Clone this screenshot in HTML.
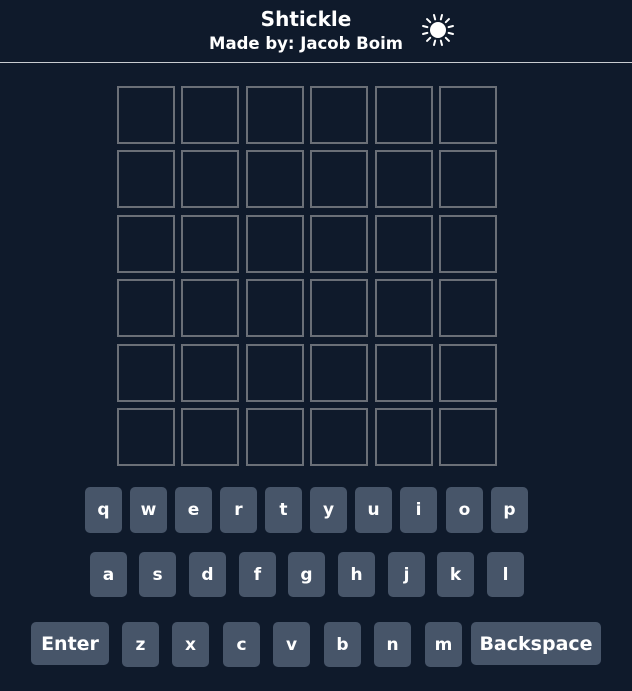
<!DOCTYPE html>
<html><head><meta charset="utf-8"><style>
html,body{margin:0;padding:0}
body{width:632px;height:691px;background:#0f1a2b;position:relative;overflow:hidden;font-family:"DejaVu Sans","Liberation Sans",sans-serif;font-weight:bold;color:#fff}
.t{position:absolute;left:0;width:612px;text-align:center}
.line{position:absolute;left:0;top:62px;width:632px;height:1px;background:#c9ccd1}
.tile{position:absolute;width:54px;height:54px;border:2px solid #6a6f77;box-sizing:content-box}
.k{position:absolute;background:#475569;border-radius:5px;display:flex;align-items:center;justify-content:center;font-size:17px;color:#fff}
</style></head><body>
<div class="t" style="top:7px;font-size:20px;">Shtickle</div>
<div class="t" style="top:34px;font-size:16.5px;">Made by: Jacob Boim</div>
<svg style="position:absolute;left:421px;top:13px" width="34" height="34" viewBox="-17 -17 34 34">
<circle r="8" fill="#fff"/>
<g stroke="#fff" stroke-width="2" stroke-linecap="round">
<line x1="0" y1="-11" x2="0" y2="-15.5" transform="rotate(15)"/>
<line x1="0" y1="-11" x2="0" y2="-15.5" transform="rotate(45)"/>
<line x1="0" y1="-11" x2="0" y2="-15.5" transform="rotate(75)"/>
<line x1="0" y1="-11" x2="0" y2="-15.5" transform="rotate(105)"/>
<line x1="0" y1="-11" x2="0" y2="-15.5" transform="rotate(135)"/>
<line x1="0" y1="-11" x2="0" y2="-15.5" transform="rotate(165)"/>
<line x1="0" y1="-11" x2="0" y2="-15.5" transform="rotate(195)"/>
<line x1="0" y1="-11" x2="0" y2="-15.5" transform="rotate(225)"/>
<line x1="0" y1="-11" x2="0" y2="-15.5" transform="rotate(255)"/>
<line x1="0" y1="-11" x2="0" y2="-15.5" transform="rotate(285)"/>
<line x1="0" y1="-11" x2="0" y2="-15.5" transform="rotate(315)"/>
<line x1="0" y1="-11" x2="0" y2="-15.5" transform="rotate(345)"/>
</g></svg>
<div class="line"></div>
<div class="k" style="left:85px;top:487px;width:37px;height:46px">q</div>
<div class="k" style="left:130px;top:487px;width:37px;height:46px">w</div>
<div class="k" style="left:175px;top:487px;width:37px;height:46px">e</div>
<div class="k" style="left:220px;top:487px;width:37px;height:46px">r</div>
<div class="k" style="left:265px;top:487px;width:37px;height:46px">t</div>
<div class="k" style="left:310px;top:487px;width:37px;height:46px">y</div>
<div class="k" style="left:355px;top:487px;width:37px;height:46px">u</div>
<div class="k" style="left:400px;top:487px;width:37px;height:46px">i</div>
<div class="k" style="left:446px;top:487px;width:37px;height:46px">o</div>
<div class="k" style="left:491px;top:487px;width:37px;height:46px">p</div>
<div class="k" style="left:90px;top:552px;width:37px;height:45px">a</div>
<div class="k" style="left:139px;top:552px;width:37px;height:45px">s</div>
<div class="k" style="left:189px;top:552px;width:37px;height:45px">d</div>
<div class="k" style="left:239px;top:552px;width:37px;height:45px">f</div>
<div class="k" style="left:288px;top:552px;width:37px;height:45px">g</div>
<div class="k" style="left:338px;top:552px;width:37px;height:45px">h</div>
<div class="k" style="left:388px;top:552px;width:37px;height:45px">j</div>
<div class="k" style="left:437px;top:552px;width:37px;height:45px">k</div>
<div class="k" style="left:487px;top:552px;width:37px;height:45px">l</div>
<div class="k" style="left:31px;top:622px;width:78px;height:43px;font-size:19px">Enter</div>
<div class="k" style="left:122px;top:622px;width:37px;height:45px">z</div>
<div class="k" style="left:172px;top:622px;width:37px;height:45px">x</div>
<div class="k" style="left:223px;top:622px;width:37px;height:45px">c</div>
<div class="k" style="left:273px;top:622px;width:37px;height:45px">v</div>
<div class="k" style="left:324px;top:622px;width:37px;height:45px">b</div>
<div class="k" style="left:374px;top:622px;width:37px;height:45px">n</div>
<div class="k" style="left:425px;top:622px;width:37px;height:45px">m</div>
<div class="k" style="left:471px;top:622px;width:130px;height:43px;font-size:19px">Backspace</div>
<div class="tile" style="left:117px;top:86px"></div><div class="tile" style="left:181px;top:86px"></div><div class="tile" style="left:246px;top:86px"></div><div class="tile" style="left:310px;top:86px"></div><div class="tile" style="left:375px;top:86px"></div><div class="tile" style="left:439px;top:86px"></div>
<div class="tile" style="left:117px;top:150px"></div><div class="tile" style="left:181px;top:150px"></div><div class="tile" style="left:246px;top:150px"></div><div class="tile" style="left:310px;top:150px"></div><div class="tile" style="left:375px;top:150px"></div><div class="tile" style="left:439px;top:150px"></div>
<div class="tile" style="left:117px;top:215px"></div><div class="tile" style="left:181px;top:215px"></div><div class="tile" style="left:246px;top:215px"></div><div class="tile" style="left:310px;top:215px"></div><div class="tile" style="left:375px;top:215px"></div><div class="tile" style="left:439px;top:215px"></div>
<div class="tile" style="left:117px;top:279px"></div><div class="tile" style="left:181px;top:279px"></div><div class="tile" style="left:246px;top:279px"></div><div class="tile" style="left:310px;top:279px"></div><div class="tile" style="left:375px;top:279px"></div><div class="tile" style="left:439px;top:279px"></div>
<div class="tile" style="left:117px;top:344px"></div><div class="tile" style="left:181px;top:344px"></div><div class="tile" style="left:246px;top:344px"></div><div class="tile" style="left:310px;top:344px"></div><div class="tile" style="left:375px;top:344px"></div><div class="tile" style="left:439px;top:344px"></div>
<div class="tile" style="left:117px;top:408px"></div><div class="tile" style="left:181px;top:408px"></div><div class="tile" style="left:246px;top:408px"></div><div class="tile" style="left:310px;top:408px"></div><div class="tile" style="left:375px;top:408px"></div><div class="tile" style="left:439px;top:408px"></div>
</body></html>
